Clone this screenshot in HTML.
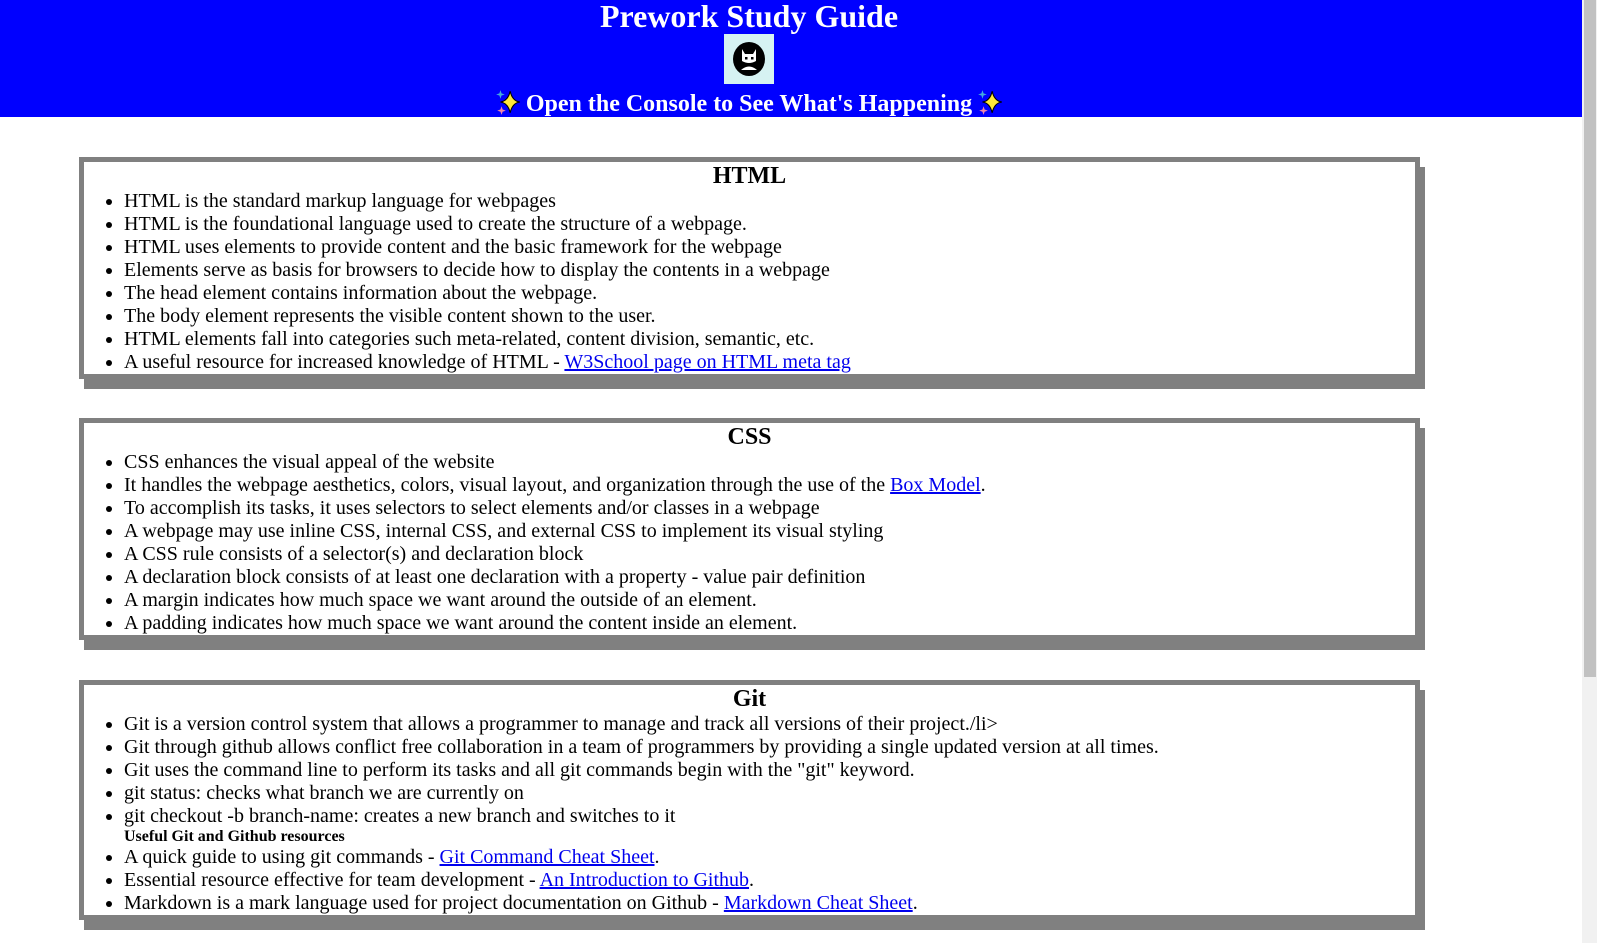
<!DOCTYPE html>
<html><head><meta charset="utf-8"><style>
html,body{margin:0;padding:0;background:#fff;overflow:hidden;}
body{width:1597px;height:943px;position:relative;font-family:"Liberation Serif",serif;color:#000;}
header{position:absolute;left:0;top:0;width:1582px;height:117px;background:#0000ff;color:#fff;}
.hin{position:absolute;left:0;top:0;width:1498px;height:117px;text-align:center;}
header h1{margin:0;font-size:32px;line-height:33px;font-weight:bold;}
.logo{width:50px;height:50px;background:#d6f2f2;margin:1px auto 0;position:relative;}
header h2{margin:0;font-size:24px;line-height:30px;position:absolute;top:88px;left:0;width:100%;}
.box{position:absolute;left:79px;width:1331px;border:5px solid #808080;box-shadow:5px 10px 0 #808080;background:#fff;}
.box h3{margin:0;text-align:center;font-size:24px;line-height:28px;}
.box ul{margin:0;padding-left:40px;font-size:20px;line-height:23px;}
.box a{color:#0000ee;}
.box h4{margin:0;font-size:16px;line-height:18px;}
.sb{position:absolute;left:1582px;top:0;width:15px;height:943px;background:#f1f1f1;}
.th{position:absolute;left:1584px;top:0;width:12px;height:677px;background:#c1c1c1;}
svg.sp{vertical-align:-5px;margin:0 4px}
</style></head><body>
<header><div class="hin">
<h1>Prework Study Guide</h1>
<div class="logo"><svg width="50" height="50" viewBox="0 0 50 50"><ellipse cx="25" cy="25" rx="16" ry="17" fill="#000"/><path d="M18 15 L21 20 L29 20 L32 15 L32 27 Q25 31 18 27Z" fill="#fff"/><rect x="21" y="23" width="2.5" height="2.5" fill="#000"/><rect x="27" y="23" width="2.5" height="2.5" fill="#000"/><path d="M17 36 Q25 29 33 36Z" fill="#fff"/></svg></div>
<h2><svg class="sp" width="28" height="28" viewBox="0 0 26 26"><path d="M15 3 Q17 12 24 13 Q17 14 15 23 Q13 14 6 13 Q13 12 15 3Z" fill="#ffe83a" stroke="#000" stroke-width="1"/><path d="M6 2 l1 3 3 1 -3 1 -1 3 -1 -3 -3 -1 3 -1z" fill="#4ad"/><path d="M7 17 l1 3 3 1 -3 1 -1 3 -1 -3 -3 -1 3 -1z" fill="#e8a"/></svg>Open the Console to See What's Happening<svg class="sp" width="28" height="28" viewBox="0 0 26 26"><path d="M15 3 Q17 12 24 13 Q17 14 15 23 Q13 14 6 13 Q13 12 15 3Z" fill="#ffe83a" stroke="#000" stroke-width="1"/><path d="M6 2 l1 3 3 1 -3 1 -1 3 -1 -3 -3 -1 3 -1z" fill="#4ad"/><path d="M7 17 l1 3 3 1 -3 1 -1 3 -1 -3 -3 -1 3 -1z" fill="#e8a"/></svg></h2>
</div></header>

<div class="box" style="top:157px">
<h3>HTML</h3>
<ul>
<li>HTML is the standard markup language for webpages</li>
<li>HTML is the foundational language used to create the structure of a webpage.</li>
<li>HTML uses elements to provide content and the basic framework for the webpage</li>
<li>Elements serve as basis for browsers to decide how to display the contents in a webpage</li>
<li>The head element contains information about the webpage.</li>
<li>The body element represents the visible content shown to the user.</li>
<li>HTML elements fall into categories such meta-related, content division, semantic, etc.</li>
<li>A useful resource for increased knowledge of HTML - <a href="#">W3School page on HTML meta tag</a></li>
</ul></div>

<div class="box" style="top:418px">
<h3>CSS</h3>
<ul>
<li>CSS enhances the visual appeal of the website</li>
<li>It handles the webpage aesthetics, colors, visual layout, and organization through the use of the <a href="#">Box Model</a>.</li>
<li>To accomplish its tasks, it uses selectors to select elements and/or classes in a webpage</li>
<li>A webpage may use inline CSS, internal CSS, and external CSS to implement its visual styling</li>
<li>A CSS rule consists of a selector(s) and declaration block</li>
<li>A declaration block consists of at least one declaration with a property - value pair definition</li>
<li>A margin indicates how much space we want around the outside of an element.</li>
<li>A padding indicates how much space we want around the content inside an element.</li>
</ul></div>

<div class="box" style="top:680px">
<h3>Git</h3>
<ul>
<li>Git is a version control system that allows a programmer to manage and track all versions of their project./li&gt;</li>
<li>Git through github allows conflict free collaboration in a team of programmers by providing a single updated version at all times.</li>
<li>Git uses the command line to perform its tasks and all git commands begin with the "git" keyword.</li>
<li>git status: checks what branch we are currently on</li>
<li>git checkout -b branch-name: creates a new branch and switches to it</li>
<h4>Useful Git and Github resources</h4>
<li>A quick guide to using git commands - <a href="#">Git Command Cheat Sheet</a>.</li>
<li>Essential resource effective for team development - <a href="#">An Introduction to Github</a>.</li>
<li>Markdown is a mark language used for project documentation on Github - <a href="#">Markdown Cheat Sheet</a>.</li>
</ul></div>

<div class="sb"></div><div class="th"></div>
</body></html>
